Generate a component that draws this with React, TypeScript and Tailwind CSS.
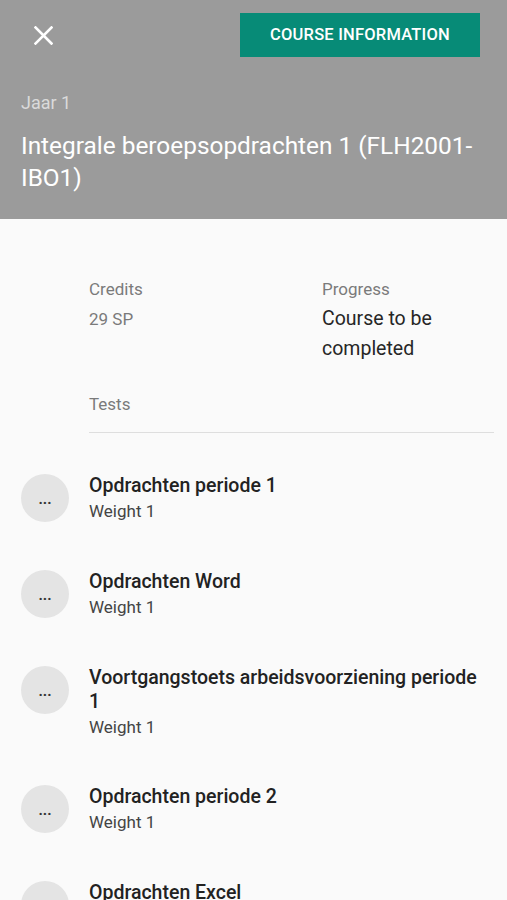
import React from 'react';

interface TestItem {
  title: string;
  weight: number;
}

const tests: TestItem[] = [
  { title: 'Opdrachten periode 1', weight: 1 },
  { title: 'Opdrachten Word', weight: 1 },
  { title: 'Voortgangstoets arbeidsvoorziening periode 1', weight: 1 },
  { title: 'Opdrachten periode 2', weight: 1 },
  { title: 'Opdrachten Excel', weight: 1 },
];

const CloseIcon: React.FC = () => (
  <svg width="19" height="19" viewBox="0 0 19 19" fill="none">
    <path d="M1.5 1.5 L17.5 17.5 M17.5 1.5 L1.5 17.5" stroke="white" strokeWidth="2.6" strokeLinecap="square" />
  </svg>
);

const TestRow: React.FC<{ item: TestItem }> = ({ item }) => (
  <div className="flex items-start gap-5 pl-[21px] pr-[21px] min-h-[48px]">
    <div className="w-12 h-12 shrink-0 rounded-full bg-[#e4e4e4] flex items-center justify-center pt-[3px] text-[#333] text-[15px] font-bold">
      ...
    </div>
    <div className="flex flex-col">
      <div className="text-[19.5px] leading-[24px] font-medium text-[#222]">{item.title}</div>
      <div className="mt-[3px] text-[17px] leading-[20px] text-[#444]">Weight {item.weight}</div>
    </div>
  </div>
);

export default function App() {
  return (
    <div className="w-[507px] h-[900px] overflow-hidden bg-[#fafafa] font-['Roboto','Liberation_Sans',sans-serif]">
      <div className="bg-[#9b9b9b] h-[219px] px-[21px] pt-[13px]">
        <div className="flex items-center justify-between h-[44px] pr-[6px]">
          <button className="w-[44px] h-[44px] flex items-center justify-center">
            <CloseIcon />
          </button>
          <button className="w-[240px] h-[44px] bg-[#078b77] text-white text-[16.5px] font-medium tracking-[0.2px] flex items-center justify-center">
            COURSE INFORMATION
          </button>
        </div>
        <div className="mt-[34px] text-[18px] leading-[24px] text-[#dadada]">Jaar 1</div>
        <div className="mt-[15px] text-[24.4px] leading-[32px] text-white">
          Integrale beroepsopdrachten 1 (FLH2001-IBO1)
        </div>
      </div>

      <div className="pt-[55px]">
        <div className="pl-[89px] pr-[13px]">
          <div className="flex">
            <div className="w-[233px] shrink-0">
              <div className="text-[17px] leading-[30px] text-[#7a7a7a]">Credits</div>
              <div className="text-[17px] leading-[30px] text-[#7a7a7a]">29 SP</div>
            </div>
            <div className="flex-1">
              <div className="text-[17px] leading-[30px] text-[#7a7a7a]">Progress</div>
              <div className="text-[19.5px] leading-[30px] text-[#262626] w-[130px]">Course to be completed</div>
            </div>
          </div>
          <div className="mt-[25px] text-[17px] leading-[30px] text-[#7a7a7a]">Tests</div>
          <div className="mt-[13px] h-px bg-[#dedede]" />
        </div>

        <div className="mt-[41px] flex flex-col gap-[48px]">
          {tests.map((t) => (
            <TestRow key={t.title} item={t} />
          ))}
        </div>
      </div>
    </div>
  );
}
